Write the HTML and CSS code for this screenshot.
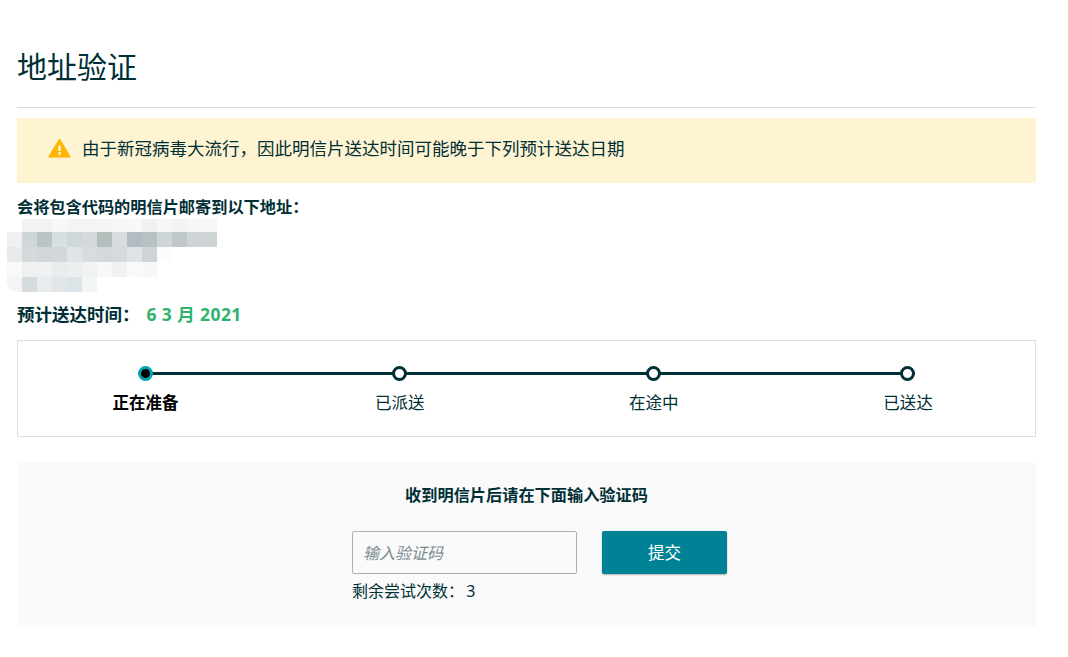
FILE: index.html
```html
<!DOCTYPE html>
<html lang="zh-CN">
<head>
    <meta charset="UTF-8">
    <title>地址验证</title>
    <link rel="stylesheet" href="styles.css">
</head>
<body>
<div class="main">
    <h1 class="title">地址验证</h1>
    <div class="alert">
        <svg class="alert-icon" width="23" height="20" viewBox="0 0 24 21">
            <path d="M12 1 L23.5 20 H0.5 Z" fill="#ffb600" stroke="#ffb600" stroke-width="1" stroke-linejoin="round"/>
            <rect x="10.8" y="8" width="2.4" height="5.5" fill="#fff"/>
            <rect x="10.8" y="15" width="2.4" height="2.4" fill="#fff"/>
        </svg>
        <p>由于新冠病毒大流行，因此明信片送达时间可能晚于下列预计送达日期</p>
    </div>
    <p class="label">会将包含代码的明信片邮寄到以下地址：</p>
    <svg class="blur" width="210" height="73" viewBox="7 219 210 73" shape-rendering="crispEdges">
        <g>
            <rect x="22" y="219" width="15" height="13" fill="#f0f2f3"/>
            <rect x="37" y="219" width="15" height="13" fill="#f1f2f3"/>
            <rect x="52" y="219" width="15" height="13" fill="#f7f8f8"/>
            <rect x="67" y="219" width="15" height="13" fill="#f3f5f5"/>
            <rect x="82" y="219" width="15" height="13" fill="#f2f4f5"/>
            <rect x="97" y="219" width="15" height="13" fill="#f4f5f6"/>
            <rect x="112" y="219" width="15" height="13" fill="#f6f7f7"/>
            <rect x="127" y="219" width="15" height="13" fill="#f7f8f8"/>
            <rect x="142" y="219" width="15" height="13" fill="#f0f1f3"/>
            <rect x="157" y="219" width="15" height="13" fill="#f6f7f7"/>
            <rect x="172" y="219" width="15" height="13" fill="#f2f3f4"/>
            <rect x="187" y="219" width="15" height="13" fill="#f6f7f7"/>
            <rect x="202" y="219" width="15" height="13" fill="#f5f6f7"/>
        </g>
        <g>
            <rect x="7" y="232" width="15" height="15" fill="#f0f0f0"/>
            <rect x="22" y="232" width="15" height="15" fill="#d0d5d7"/>
            <rect x="37" y="232" width="15" height="15" fill="#bcc4c6"/>
            <rect x="52" y="232" width="15" height="15" fill="#d8dfe2"/>
            <rect x="67" y="232" width="15" height="15" fill="#d0d7da"/>
            <rect x="82" y="232" width="15" height="15" fill="#d4dadc"/>
            <rect x="97" y="232" width="15" height="15" fill="#b5bdbd"/>
            <rect x="112" y="232" width="15" height="15" fill="#d8dcdd"/>
            <rect x="127" y="232" width="15" height="15" fill="#b3bcc2"/>
            <rect x="142" y="232" width="15" height="15" fill="#bac1c5"/>
            <rect x="157" y="232" width="15" height="15" fill="#ced5d8"/>
            <rect x="172" y="232" width="15" height="15" fill="#bfc7c8"/>
            <rect x="187" y="232" width="30" height="15" fill="#cfd5d6"/>
        </g>
        <g>
            <rect x="7" y="247" width="15" height="15" fill="#e8e9e9"/>
            <rect x="22" y="247" width="15" height="15" fill="#d5d9db"/>
            <rect x="37" y="247" width="15" height="15" fill="#d0d6d9"/>
            <rect x="52" y="247" width="15" height="15" fill="#d2d8da"/>
            <rect x="67" y="247" width="15" height="15" fill="#e0e4e5"/>
            <rect x="82" y="247" width="15" height="15" fill="#d8dcde"/>
            <rect x="97" y="247" width="15" height="15" fill="#d3d8dd"/>
            <rect x="112" y="247" width="15" height="15" fill="#d6dadf"/>
            <rect x="127" y="247" width="15" height="15" fill="#dfe3e5"/>
            <rect x="142" y="247" width="15" height="15" fill="#cdd3d6"/>
            <rect x="157" y="247" width="15" height="15" fill="#fcfcfc"/>
        </g>
        <g>
            <rect x="7" y="262" width="15" height="15" fill="#f8f9f9"/>
            <rect x="22" y="262" width="15" height="15" fill="#eff0f1"/>
            <rect x="37" y="262" width="15" height="15" fill="#f0f1f2"/>
            <rect x="52" y="262" width="15" height="15" fill="#e8ecec"/>
            <rect x="67" y="262" width="15" height="15" fill="#eceff0"/>
            <rect x="82" y="262" width="15" height="15" fill="#f0f2f3"/>
            <rect x="97" y="262" width="15" height="15" fill="#f8f8f8"/>
            <rect x="112" y="262" width="15" height="15" fill="#f0f1f2"/>
            <rect x="127" y="262" width="15" height="15" fill="#f8f9f9"/>
            <rect x="142" y="262" width="15" height="15" fill="#f6f7f7"/>
        </g>
        <g>
            <path d="M7 277 H22 V292 H19 Q7 292 7 280 Z" fill="#f4f4f4"/>
            <rect x="22" y="277" width="15" height="15" fill="#d6dbde"/>
            <rect x="37" y="277" width="15" height="15" fill="#e9ecee"/>
            <rect x="52" y="277" width="15" height="15" fill="#e2e6e8"/>
            <rect x="67" y="277" width="15" height="15" fill="#dde4e8"/>
            <rect x="82" y="277" width="15" height="15" fill="#f3f5f5"/>
        </g>
    </svg>
    <p class="delivery"><span class="delivery-label">预计送达时间：</span><span class="delivery-date">6 3 月 2021</span></p>
    <div class="steps">
        <div class="step active">
            <span class="dot"></span>
            <p>正在准备</p>
        </div>
        <div class="step">
            <span class="dot"></span>
            <p>已派送</p>
        </div>
        <div class="step">
            <span class="dot"></span>
            <p>在途中</p>
        </div>
        <div class="step">
            <span class="dot"></span>
            <p>已送达</p>
        </div>
    </div>
    <div class="panel">
        <p class="panel-title">收到明信片后请在下面输入验证码</p>
        <div class="form">
            <div class="form-row">
                <input class="code-input" type="text" placeholder="输入验证码">
                <a class="btn">提交</a>
            </div>
            <p class="tries">剩余尝试次数： 3</p>
        </div>
    </div>
</div>
</body>
</html>
```

FILE: styles.css
```css
*{
    margin: 0;
    padding: 0;
    box-sizing: border-box;
}
html,body {
    height: 100%;
    background-color: #ffffff;
}
body{
    font-family: "Noto Sans", "Noto Sans CJK SC", sans-serif;
    color: #002f36;
    font-size: 16px;
}
.main{
    width: 1036px;
    padding-left: 17px;
    padding-top: 46px;
}
.title{
    font-size: 30px;
    font-weight: 400;
    line-height: 42px;
    height: 62px;
    border-bottom: 1px solid #dcdcdc;
}
.alert{
    display: flex;
    align-items: center;
    height: 65px;
    margin-top: 10px;
    padding-left: 31px;
    padding-bottom: 6px;
    background-color: #fff4d1;
    font-size: 17.5px;
}
.alert-icon{
    margin-right: 11px;
}
.label{
    font-weight: 700;
    font-size: 16.2px;
    line-height: 20px;
    margin-top: 14px;
}
.blur{
    display: block;
    margin-left: -10px;
    margin-top: 2px;
}
.delivery{
    display: flex;
    align-items: center;
    margin-top: 10px;
    height: 22px;
    font-weight: 700;
    font-size: 17.5px;
}
.delivery-date{
    color: #2fb36b;
    margin-left: 7px;
    letter-spacing: 0.4px;
}
.steps{
    display: grid;
    grid-template-columns: repeat(4, 1fr);
    height: 97px;
    margin-top: 16px;
    padding-left: 0.5px;
    border: 1px solid #dcdde0;
}
.step{
    position: relative;
    display: flex;
    flex-direction: column;
    align-items: center;
    padding-top: 25px;
}
.step:not(:last-child)::after{
    content: "";
    position: absolute;
    left: 50%;
    top: 31px;
    width: 100%;
    height: 3px;
    background-color: #002f36;
}
.dot{
    position: relative;
    z-index: 1;
    width: 15px;
    height: 15px;
    border: 3px solid #002f36;
    border-radius: 50%;
    background-color: #ffffff;
}
.step p{
    margin-top: 11px;
    line-height: 22px;
    font-size: 16.5px;
}
.step.active .dot{
    border-color: #00a4b4;
    background-color: #000000;
}
.step.active p{
    font-weight: 700;
    color: #000000;
}
.panel{
    height: 165px;
    margin-top: 25px;
    padding-top: 22px;
    background-color: #fafafa;
    border-radius: 4px;
}
.panel-title{
    font-weight: 700;
    line-height: 22px;
    text-align: center;
    font-size: 16.2px;
}
.form{
    margin-top: 25px;
    margin-left: 335px;
}
.form-row{
    display: flex;
    gap: 25px;
}
.code-input{
    width: 225px;
    height: 43px;
    padding-left: 10px;
    border: 1px solid #a6b2b5;
    border-radius: 2px;
    background-color: #fafafa;
    font-family: inherit;
    font-size: 16px;
}
.code-input::placeholder{
    color: #7a8a8e;
    font-style: italic;
}
.btn{
    width: 125px;
    height: 43px;
    line-height: 43px;
    background-color: #008296;
    color: #ffffff;
    border-radius: 2px;
    text-align: center;
    font-size: 16.5px;
    box-shadow: 0 1px 2px rgba(0,0,0,0.3);
}
.tries{
    margin-top: 7px;
    line-height: 20px;
    word-spacing: -2px;
}
```
